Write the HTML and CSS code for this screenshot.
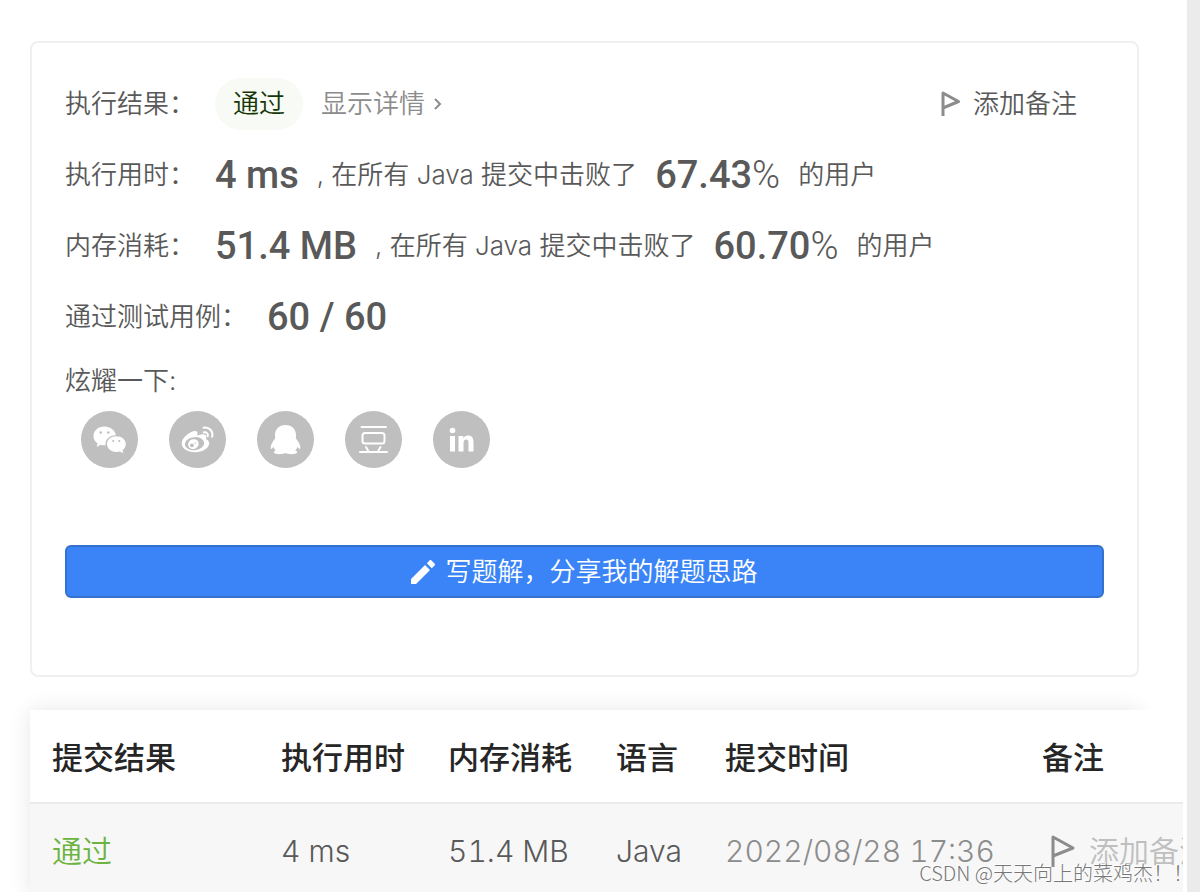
FILE: index.html
```html
<!DOCTYPE html>
<html lang="zh-CN">
<head>
<meta charset="utf-8">
<title>提交结果</title>
<link rel="stylesheet" href="styles.css">
</head>
<body>
<div class="page">
  <main class="content">
    <section class="card">
      <div class="row result-row">
        <span class="label">执行结果：</span>
        <span class="tag">通过</span>
        <a class="detail" href="#">显示详情
          <svg class="chevron" viewBox="0 0 10 16"><path d="M2 3l5 5-5 5"/></svg>
        </a>
        <button class="note" type="button">
          <svg class="flag" viewBox="0 0 20 26"><path d="M2 25V2l15.500 8.500L2 17"/></svg>
          <span>添加备注</span>
        </button>
      </div>
      <div class="row">
        <span class="label">执行用时：</span>
        <strong class="figure">4 ms</strong>
        <span>, 在所有 Java 提交中击败了</span>
        <strong class="figure">67.43<span class="percent">%</span></strong>
        <span>的用户</span>
      </div>
      <div class="row">
        <span class="label">内存消耗：</span>
        <strong class="figure">51.4 MB</strong>
        <span>, 在所有 Java 提交中击败了</span>
        <strong class="figure">60.70<span class="percent">%</span></strong>
        <span>的用户</span>
      </div>
      <div class="row">
        <span class="label">通过测试用例：</span>
        <strong class="figure">60 / 60</strong>
      </div>
      <div class="share-title">炫耀一下:</div>
      <div class="share">
        <button class="round" type="button" aria-label="微信">
          <svg viewBox="0 0 57 57">
            <path class="fill" d="M23.500 15.500c-6.500 0-11 4.200-11 9.500 0 3.200 1.600 5.600 4.100 7.400l-1 3.600 4.200-2.200c1.700.5 3.300.6 4.800.5-.9-5.500 3.800-10.300 10.300-10.100-.8-5.200-5.600-8.700-11.400-8.700z"/>
            <path class="fill" d="M35.300 25.200c-5.600 0-9.300 3.500-9.300 7.800s3.900 7.900 9.300 7.900c1.300 0 2.500-.2 3.600-.5l3.500 1.900-.9-3.100c2.100-1.500 3.300-3.600 3.300-6.200 0-4.300-4.100-7.800-9.500-7.800z"/>
            <g class="hole"><circle cx="19.800" cy="21.500" r="1.300"/><circle cx="27.300" cy="21.500" r="1.300"/><circle cx="32.200" cy="30" r="1.100"/><circle cx="38.300" cy="30" r="1.100"/></g>
          </svg>
        </button>
        <button class="round" type="button" aria-label="微博">
          <svg viewBox="0 0 57 57">
            <path class="fill" d="M26.500 20c2.500.1 2.300 2.500 1.600 4.600 2-.8 6.600-2.300 8.500-.3 1 1 .8 2.500.4 3.900 1.900.6 3.200 2 3.200 4.100 0 4.700-6.700 9-14.100 9-7.500 0-13.400-3.700-13.400-9 0-5.500 8.500-12.600 13.800-12.300z"/>
            <ellipse class="hole" cx="25.500" cy="32.700" rx="9.700" ry="6.600" transform="rotate(-6 25.500 32.700)"/>
            <ellipse class="fill" cx="24.400" cy="33.100" rx="5.300" ry="4.900" transform="rotate(-20 24.400 33.100)"/>
            <circle class="hole" cx="22.900" cy="34.300" r="1.900"/><circle class="hole" cx="26.200" cy="32" r=".8"/>
            <path class="wave" d="M34.500 16.700c5.700-1 10 3.500 8.600 9M34.700 21.300c2.800-.5 4.700 1.400 4 4"/>
          </svg>
        </button>
        <button class="round" type="button" aria-label="QQ">
          <svg viewBox="0 0 57 57">
            <path class="fill" d="M28.500 14c-6.800 0-10.500 4.500-10.500 10.200l.1 3.300c-2.700 3-4.700 6.900-4.400 9.700.2 1.400 1.400.8 2.900-1.400.3 1.400 1.100 2.700 2.200 3.700-1.700.6-2.300 1.400-1.900 2.300.9 1.800 9.400 1.700 11.600.2 2.200 1.500 10.700 1.600 11.600-.2.400-.9-.2-1.700-1.900-2.300 1.100-1 1.900-2.300 2.200-3.700 1.500 2.200 2.700 2.800 2.900 1.400.3-2.800-1.700-6.700-4.400-9.700l.1-3.300C39 18.500 35.300 14 28.500 14z"/>
          </svg>
        </button>
        <button class="round" type="button" aria-label="豆瓣">
          <svg viewBox="0 0 57 57"><path class="line" d="M16.500 16h24.500M15 41h27M21 36l2.500 4.500M35.500 36l-2.500 4.500"/><rect class="line" x="17.500" y="22" width="22" height="10.500" rx="2.500"/></svg>
        </button>
        <button class="round" type="button" aria-label="LinkedIn">
          <svg viewBox="0 0 57 57"><circle class="fill" cx="19.500" cy="19.500" r="2.800"/><path class="fill" d="M17 25h5v15.500h-5zM25.500 25h4.800v2.200c1-1.700 2.700-2.600 4.700-2.600 4 0 5.500 2.500 5.500 6.700v9.200h-5v-8.300c0-2.300-.6-3.600-2.300-3.600-1.900 0-2.700 1.400-2.700 3.700v8.200h-5z"/></svg>
        </button>
      </div>
      <button class="write" type="button">
        <svg class="pencil" viewBox="0 0 24 24"><path d="M0 19v5h5L19 10l-5-5zM23.500 5.500c.6-.6.600-1.400 0-2l-3-3c-.6-.6-1.400-.6-2 0L15.800 3.200l5 5z"/></svg>
        <span>写题解，分享我的解题思路</span>
      </button>
    </section>
    <section class="history">
      <table class="table">
        <colgroup><col class="c-result"><col class="c-time"><col class="c-memory"><col class="c-lang"><col class="c-date"><col></colgroup>
        <thead>
          <tr><th>提交结果</th><th>执行用时</th><th>内存消耗</th><th>语言</th><th>提交时间</th><th>备注</th></tr>
        </thead>
        <tbody>
          <tr>
            <td><a class="passed" href="#">通过</a></td><td>4 ms</td><td>51.4 MB</td><td>Java</td><td class="date">2022/08/28 17:36</td>
            <td><button class="cell-note" type="button"><svg class="flag-large" viewBox="0 0 26 34"><path d="M3 33V3l20 11L3 22"/></svg><span>添加备注</span></button></td>
          </tr>
        </tbody>
      </table>
    </section>
  </main>
  <div class="gutter"></div>
  <div class="watermark">CSDN @天天向上的菜鸡杰！！</div>
</div>
</body>
</html>
```
FILE: styles.css
```css
* { box-sizing: border-box; }
body {
  margin: 0;
  background: #fff;
  color: #595959;
  font: 350 26px/40px Inter, "Noto Sans CJK SC", sans-serif;
}
button {
  margin: 0;
  padding: 0;
  border: 0;
  background: none;
  color: inherit;
  font: inherit;
  cursor: pointer;
}
a { color: inherit; text-decoration: none; }
svg { display: block; flex: none; }
.page {
  position: relative;
  display: flex;
  height: 100vh;
  overflow: hidden;
}
.content { flex: 1; min-width: 0; padding: 41px 48px 0 30px; }
.gutter { width: 13px; background: #ebebeb; }

.card {
  border: 2px solid #f0f0f0;
  border-radius: 8px;
  padding: 25px 33px 77px;
}
.row {
  display: flex;
  align-items: center;
  gap: 18px;
  height: 71px;
  white-space: nowrap;
}
.label { margin-right: 2px; }
.tag {
  padding: 6px 18px;
  border-radius: 26px;
  background: #f7faf5;
  color: #153605;
}
.detail { display: flex; align-items: center; gap: 8px; color: #8c8c8c; }
.chevron { width: 10px; height: 16px; }
.chevron path { fill: none; stroke: #8c8c8c; stroke-width: 2; }
.note { display: flex; align-items: center; gap: 12px; margin: 0 27px 0 auto; }
.flag { width: 20px; height: 26px; }
.flag path, .flag-large path {
  fill: none;
  stroke: #8c8c8c;
  stroke-width: 3;
  stroke-linejoin: round;
}
.figure { font: 500 38px/48px Roboto, sans-serif; }
.percent { font-weight: 300; }
.share-title { line-height: 58px; }
.share { display: flex; gap: 31px; margin: 1px 0 77px 16px; }
.round { width: 57px; height: 57px; border-radius: 50%; background: #bfbfbf; }
.fill { fill: #fff; }
.hole { fill: #bfbfbf; }
.line, .wave { fill: none; stroke: #fff; stroke-width: 2; stroke-linecap: round; }
.write {
  display: flex;
  align-items: center;
  justify-content: center;
  gap: 10px;
  width: 100%;
  height: 53px;
  border: 2px solid #3572ce;
  border-radius: 6px;
  background: #3a84f7;
  color: #fff;
}
.pencil { width: 24px; height: 24px; fill: #fff; }

.history {
  margin-top: 33px;
  box-shadow: 0 0 20px rgba(0, 0, 0, 0.1);
}
.table {
  width: 104%;
  border-collapse: collapse;
  table-layout: fixed;
  background: #fff;
  font-size: 31px;
  font-variant-numeric: tabular-nums;
  text-align: left;
  white-space: nowrap;
}
.c-result { width: 229px; }
.c-time { width: 167px; }
.c-memory { width: 168px; }
.c-lang { width: 109px; }
.c-date { width: 317px; }
.table th {
  height: 93px;
  padding: 4px 0 0 22px;
  border-bottom: 2px solid #ebebeb;
  color: #262626;
  font-weight: 500;
}
.table td {
  height: 94px;
  padding: 0 0 0 22px;
  overflow: hidden;
  background: #f7f7f7;
  font-size: 30px;
}
.table .date { color: #8c8c8c; }
.passed { color: #6db33f; }
.cell-note { display: flex; align-items: center; gap: 13px; padding-left: 8px; color: #bfbfbf; }
.flag-large { width: 26px; height: 34px; }

.watermark {
  position: absolute;
  right: 7px;
  bottom: 4px;
  color: #777;
  font: 300 20px/30px "Noto Sans CJK SC", sans-serif;
  text-shadow: -1px -1px 0 #fff;
  white-space: nowrap;
}
```
